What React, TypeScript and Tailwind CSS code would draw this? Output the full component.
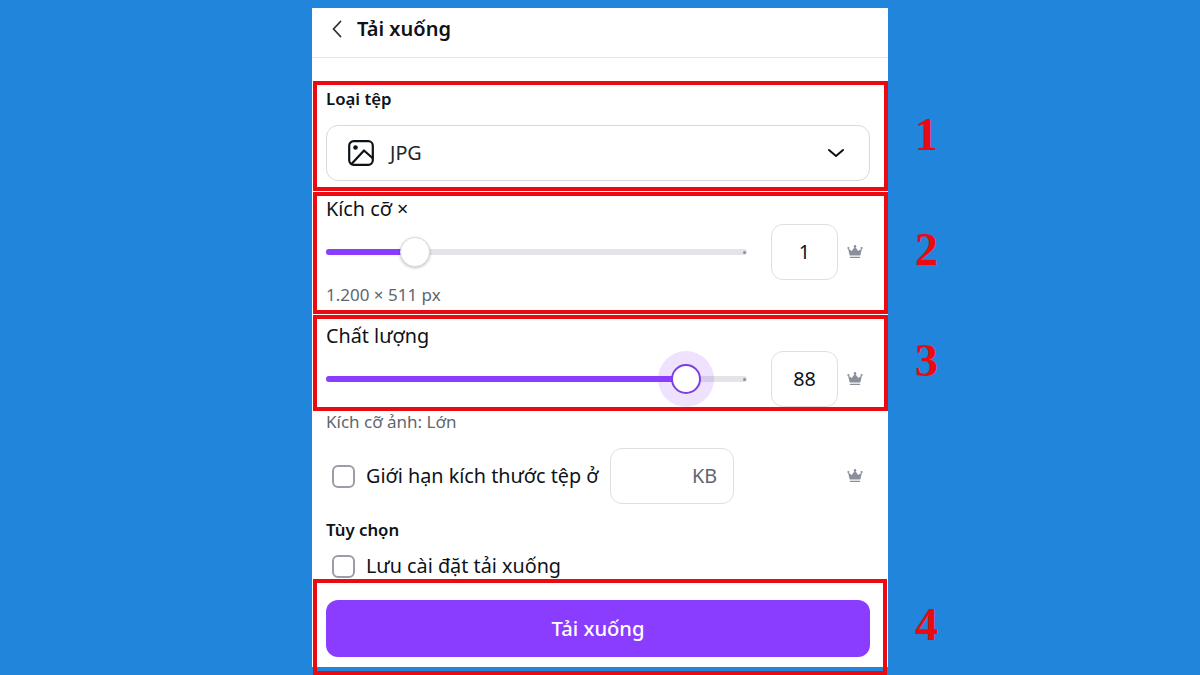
import type { ReactNode } from "react";

const FONT = { fontFamily: '"Noto Sans", sans-serif' };

function CrownIcon() {
  return (
    <svg viewBox="0 0 16 16" className="h-4 w-4 shrink-0" fill="#8b8f99" aria-hidden="true">
      <circle cx="1.4" cy="4" r="1.1" />
      <circle cx="8" cy="2.2" r="1.2" />
      <circle cx="14.6" cy="4" r="1.1" />
      <path d="M1 4.5 L4.8 7 L8 2.5 L11.2 7 L15 4.5 L13.3 11.6 H2.7 Z" />
      <rect x="2.8" y="12.8" width="10.4" height="1.3" rx="0.5" />
    </svg>
  );
}

function ImageIcon() {
  return (
    <svg viewBox="0 0 26 26" className="h-[26px] w-[26px]" fill="none" stroke="#0e1318" strokeWidth="2.2" aria-hidden="true">
      <rect x="1.2" y="1.2" width="23.6" height="23.6" rx="4.5" />
      <circle cx="7.5" cy="7.5" r="2.3" fill="#0e1318" stroke="none" />
      <path d="M3.5 24 L16 10.5 L25 18.5" strokeLinejoin="round" />
    </svg>
  );
}

function Chevron({ dir }: { dir: "down" | "left" }) {
  return dir === "down" ? (
    <svg viewBox="0 0 18 10" className="h-[10px] w-[18px]" fill="none" stroke="#0e1318" strokeWidth="2" strokeLinecap="round" strokeLinejoin="round" aria-hidden="true">
      <path d="M2 2 L9 8 L16 2" />
    </svg>
  ) : (
    <svg viewBox="0 0 10 18" className="h-[18px] w-[10px]" fill="none" stroke="#2b2f36" strokeWidth="1.8" strokeLinecap="round" strokeLinejoin="round" aria-hidden="true">
      <path d="M8.5 1.5 L1.5 9 L8.5 16.5" />
    </svg>
  );
}

function Slider({ percent, focused }: { percent: number; focused?: boolean }) {
  return (
    <div className="relative h-[6px] w-[421px] shrink-0 rounded-full bg-[#e3e3e8]">
      <div className="h-full rounded-full bg-[#8b3dff]" style={{ width: `${percent}%` }} />
      <span className="absolute right-[1px] top-[2px] h-[3px] w-[3px] rounded-full bg-[#8b8f99]" />
      {focused ? (
        <span
          className="absolute top-[-25px] h-[56px] w-[56px] -translate-x-1/2 rounded-full bg-[#8b3dff]/15"
          style={{ left: `${percent}%` }}
        />
      ) : null}
      <span
        className={`absolute top-[-12px] h-[30px] w-[30px] -translate-x-1/2 rounded-full bg-white ${
          focused ? "border-2 border-[#7d3fe0]" : "border border-[#dcdce0] shadow-[0_1px_3px_rgba(0,0,0,0.25)]"
        }`}
        style={{ left: `${percent}%` }}
      />
    </div>
  );
}

function SliderRow({ percent, value, focused }: { percent: number; value: string; focused?: boolean }) {
  return (
    <div className="flex h-[56px] items-center">
      <Slider percent={percent} focused={focused} />
      <div className="ml-6 flex h-[56px] w-[67px] shrink-0 items-center justify-center rounded-xl border-[1.5px] border-[#dfdfe3] text-[19.8px] text-[#0e1318]">
        {value}
      </div>
      <span className="ml-[9px]">
        <CrownIcon />
      </span>
    </div>
  );
}

function Checkbox() {
  return <span className="h-[23px] w-[23px] shrink-0 rounded-[6px] border-2 border-[#9a9da5] bg-white" />;
}

function Marked({ label, className, children }: { label: string; className: string; children: ReactNode }) {
  return (
    <section className={`relative border-4 border-[#ea0a10] ${className}`}>
      {children}
      <span
        className="absolute left-[598px] text-[46px] font-bold leading-none text-[#ea0a10]"
        style={{ fontFamily: '"Liberation Serif", serif', top: "var(--num-top)" }}
      >
        {label}
      </span>
    </section>
  );
}

export default function App() {
  return (
    <div className="h-[675px] overflow-hidden bg-[#2185dc] pt-2" style={FONT}>
      <div className="mx-auto h-[667px] w-[576px] bg-[linear-gradient(#fff_659px,#2185dc_659px)]">
        <header className="flex h-[50px] items-center border-b border-[#e6e6e8] pb-[8px] pl-[20px] text-[#0e1318]">
          <Chevron dir="left" />
          <h1 className="ml-[15px] text-[20px] font-semibold leading-none">Tải xuống</h1>
        </header>

        <Marked label="1" className="ml-px mt-[23px] h-[110px] pl-[9px] pr-[14px] pt-[2px] [--num-top:27px]">
          <p className="text-[16.8px] font-semibold leading-6 text-[#0e1318]">Loại tệp</p>
          <div className="mt-[14px] flex h-[56px] items-center rounded-xl border-[1.5px] border-[#d9d9dd] pl-[21px] pr-6">
            <ImageIcon />
            <span className="ml-[16px] flex-1 text-[19.8px] text-[#22262b]">JPG</span>
            <Chevron dir="down" />
          </div>
        </Marked>

        <Marked label="2" className="ml-px mt-px h-[122px] pl-[9px] pt-[1px] [--num-top:31px]">
          <p className="text-[19.8px] leading-6 text-[#0e1318]">Kích cỡ ×</p>
          <div className="mt-[3px]">
            <SliderRow percent={21.2} value="1" />
          </div>
          <p className="mt-[3px] text-[17px] leading-6 text-[#5f6670]">1.200 × 511 px</p>
        </Marked>

        <Marked label="3" className="ml-px mt-px h-[96px] pl-[9px] pt-[5px] [--num-top:19px]">
          <p className="text-[19.8px] leading-6 text-[#0e1318]">Chất lượng</p>
          <div className="mt-[3px]">
            <SliderRow percent={85.5} value="88" focused />
          </div>
        </Marked>

        <div className="pl-[14px]">
          <p className="text-[17px] leading-[22px] text-[#5f6670]">Kích cỡ ảnh: Lớn</p>
          <div className="mt-[15px] flex h-[56px] items-center pl-[6px]">
            <Checkbox />
            <span className="ml-[11px] w-[244px] shrink-0 whitespace-nowrap text-[19.8px] text-[#0e1318]">Giới hạn kích thước tệp ở</span>
            <div className="flex h-[56px] w-[124px] shrink-0 items-center justify-end rounded-xl border-[1.5px] border-[#dfdfe3] pr-[16px] text-[19.8px] text-[#5f6670]">
              KB
            </div>
            <span className="ml-[113px]">
              <CrownIcon />
            </span>
          </div>
          <p className="mt-[14px] text-[16.8px] font-semibold leading-6 text-[#0e1318]">Tùy chọn</p>
          <div className="mt-[12px] flex h-6 items-center pl-[6px]">
            <Checkbox />
            <span className="ml-[11px] whitespace-nowrap text-[19.8px] text-[#0e1318]">Lưu cài đặt tải xuống</span>
          </div>
        </div>

        <Marked label="4" className="ml-px mt-px h-[96px] w-[574px] [--num-top:19px]">
          <div className="h-[84px] bg-white pl-[9px] pr-[13px] pt-[17px]">
            <button
              type="button"
              className="h-[57px] w-full rounded-xl bg-[#8b3dff] text-[20.2px] font-medium text-white"
            >
              Tải xuống
            </button>
          </div>
        </Marked>
      </div>
    </div>
  );
}
